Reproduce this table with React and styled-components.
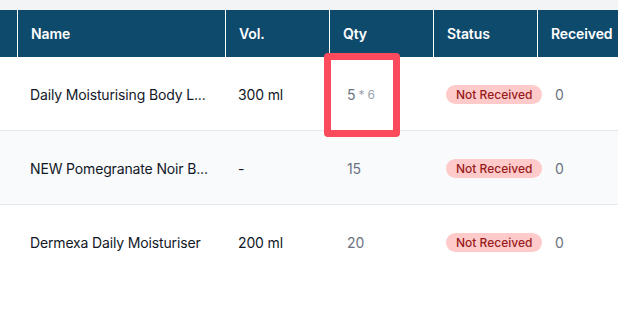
import React from 'react';
import styled, { createGlobalStyle } from 'styled-components';

const GlobalStyle = createGlobalStyle`
  html, body {
    margin: 0;
    padding: 0;
    background: #ffffff;
    font-family: Inter, "Noto Sans", sans-serif;
  }
`;

const COLUMNS = '17px 208px 104px 104px 104px 1fr';

const Page = styled.div`
  width: 618px;
  height: 323px;
  overflow: hidden;
  background: #ffffff;
`;

const TopStrip = styled.div`
  height: 10px;
  background: #f3f4f6;
`;

const TableWrapper = styled.div`
  position: relative;
  width: 680px;
`;

const HeaderRow = styled.div`
  display: grid;
  grid-template-columns: ${COLUMNS};
  height: 47px;
  background: #0e4a6c;
`;

const HeaderCell = styled.div`
  display: flex;
  align-items: center;
  padding: 0 13px;
  color: #ffffff;
  font-size: 14px;
  font-weight: 600;
  letter-spacing: -0.1px;
  border-left: ${(p) => (p.$first ? 'none' : '1px solid #ffffff')};
  white-space: nowrap;
`;

const Row = styled.div`
  display: grid;
  grid-template-columns: ${COLUMNS};
  height: 74px;
  background: ${(p) => (p.$striped ? '#f9fafb' : '#ffffff')};
  border-bottom: ${(p) => (p.$last ? 'none' : '1px solid #e5e7eb')};
  box-sizing: border-box;
  padding-top: 1px;
`;

const Cell = styled.div`
  display: flex;
  align-items: center;
  padding: 0 13px 0 ${(p) => (p.$numeric ? '18px' : '13px')};
  font-size: 14px;
  letter-spacing: -0.15px;
  color: ${(p) => (p.$muted ? '#6b7280' : '#111827')};
  white-space: nowrap;
  overflow: visible;
`;

const Sub = styled.span`
  font-size: 12px;
  color: #9ca3af;
  margin-left: 3px;
`;

const Badge = styled.span`
  display: inline-flex;
  align-items: center;
  height: 19px;
  padding: 0 10px;
  border-radius: 10px;
  background: #fecaca;
  color: #991b1b;
  font-size: 12px;
  font-weight: 500;
  letter-spacing: 0;
  white-space: nowrap;
`;

const Highlight = styled.div`
  position: absolute;
  left: 324px;
  top: 43px;
  width: 76px;
  height: 84px;
  border: 7px solid #fa4a5b;
  border-radius: 4px;
  box-sizing: border-box;
  pointer-events: none;
`;

const items = [
  { name: 'Daily Moisturising Body L...', vol: '300 ml', qty: '5', pack: '6', received: 0 },
  { name: 'NEW Pomegranate Noir B...', vol: '-', qty: '15', received: 0 },
  { name: 'Dermexa Daily Moisturiser', vol: '200 ml', qty: '20', received: 0 },
];

export default function App() {
  return (
    <Page>
      <GlobalStyle />
      <TopStrip />
      <TableWrapper>
        <HeaderRow>
          <HeaderCell $first />
          <HeaderCell>Name</HeaderCell>
          <HeaderCell>Vol.</HeaderCell>
          <HeaderCell>Qty</HeaderCell>
          <HeaderCell>Status</HeaderCell>
          <HeaderCell>Received</HeaderCell>
        </HeaderRow>
        {items.map((item, index) => (
          <Row key={index} $striped={index % 2 === 1} $last={index === items.length - 1}>
            <Cell />
            <Cell>{item.name}</Cell>
            <Cell>{item.vol}</Cell>
            <Cell $numeric $muted>
              {item.qty}
              {item.pack && <Sub>* {item.pack}</Sub>}
            </Cell>
            <Cell>
              <Badge>Not Received</Badge>
            </Cell>
            <Cell $numeric $muted>{item.received}</Cell>
          </Row>
        ))}
        <Highlight />
      </TableWrapper>
    </Page>
  );
}
